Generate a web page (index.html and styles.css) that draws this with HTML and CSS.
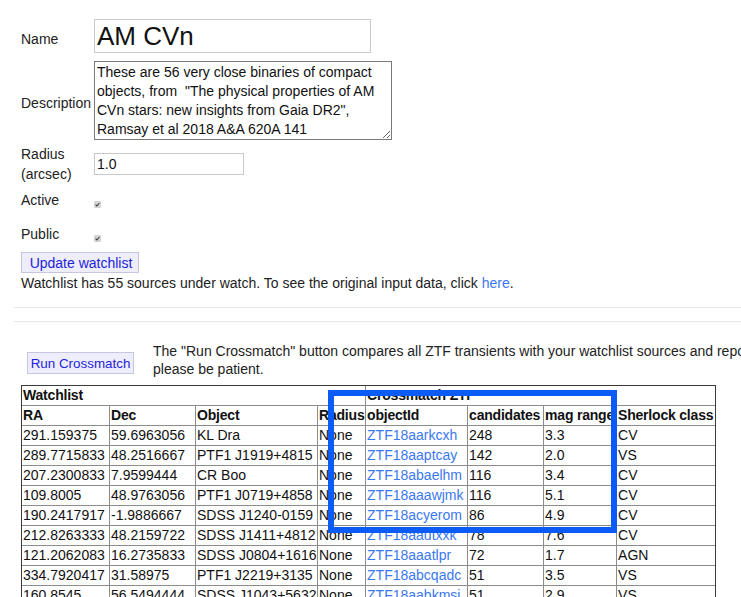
FILE: index.html
```html
<!DOCTYPE html>
<html>
<head>
<meta charset="utf-8">
<title>Watchlist AM CVn</title>
<link rel="stylesheet" href="styles.css">
</head>
<body>
<div class="page">
  <form class="wl-form">
    <div class="row row-name">
      <label class="lbl">Name</label>
      <input class="in-name" type="text" value="AM CVn">
    </div>
    <div class="row row-desc">
      <label class="lbl">Description</label>
      <textarea class="in-desc">These are 56 very close binaries of compact objects, from  "The physical properties of AM CVn stars: new insights from Gaia DR2", Ramsay et al 2018 A&amp;A 620A 141</textarea>
    </div>
    <div class="row row-radius">
      <label class="lbl">Radius<br>(arcsec)</label>
      <input class="in-radius" type="text" value="1.0">
    </div>
    <div class="row row-check row-active">
      <label class="lbl">Active</label>
      <span class="chk"><svg width="7" height="7" viewBox="0 0 7 7"><rect x="0" y="0" width="7" height="7" rx="1" fill="#d4d4d4"/><path d="M1.6 3.7 L2.9 5 L5.4 2" fill="none" stroke="#3a3a3a" stroke-width="1.1"/></svg></span>
    </div>
    <div class="row row-check row-public">
      <label class="lbl">Public</label>
      <span class="chk"><svg width="7" height="7" viewBox="0 0 7 7"><rect x="0" y="0" width="7" height="7" rx="1" fill="#d4d4d4"/><path d="M1.6 3.7 L2.9 5 L5.4 2" fill="none" stroke="#3a3a3a" stroke-width="1.1"/></svg></span>
    </div>
    <button type="button" class="btn btn-update">Update watchlist</button>
    <p class="info">Watchlist has 55 sources under watch. To see the original input data, click <a href="#">here</a>.</p>
  </form>
  <div class="rule rule-1"></div>
  <div class="rule rule-2"></div>
  <div class="xm">
    <button type="button" class="btn btn-run">Run Crossmatch</button>
    <p class="xm-text">The "Run Crossmatch" button compares all ZTF transients with your watchlist sources and reports the matches. This may take a while,<br>please be patient.</p>
  </div>
  <div class="table-wrap">
    <table class="wl-table">
      <colgroup>
        <col class="c-ra"><col class="c-dec"><col class="c-obj"><col class="c-rad">
        <col class="c-oid"><col class="c-cand"><col class="c-mag"><col class="c-sher">
      </colgroup>
      <tr><th colspan="4">Watchlist</th><th colspan="4">Crossmatch ZTF</th></tr>
      <tr><th>RA</th><th>Dec</th><th>Object</th><th>Radius</th><th>objectId</th><th>candidates</th><th>mag range</th><th>Sherlock class</th></tr>
      <tr><td>291.159375</td><td>59.6963056</td><td>KL Dra</td><td>None</td><td><a href="#">ZTF18aarkcxh</a></td><td>248</td><td>3.3</td><td>CV</td></tr>
      <tr><td>289.7715833</td><td>48.2516667</td><td>PTF1 J1919+4815</td><td>None</td><td><a href="#">ZTF18aaptcay</a></td><td>142</td><td>2.0</td><td>VS</td></tr>
      <tr><td>207.2300833</td><td>7.9599444</td><td>CR Boo</td><td>None</td><td><a href="#">ZTF18abaelhm</a></td><td>116</td><td>3.4</td><td>CV</td></tr>
      <tr><td>109.8005</td><td>48.9763056</td><td>PTF1 J0719+4858</td><td>None</td><td><a href="#">ZTF18aaawjmk</a></td><td>116</td><td>5.1</td><td>CV</td></tr>
      <tr><td>190.2417917</td><td>-1.9886667</td><td>SDSS J1240-0159</td><td>None</td><td><a href="#">ZTF18acyerom</a></td><td>86</td><td>4.9</td><td>CV</td></tr>
      <tr><td>212.8263333</td><td>48.2159722</td><td>SDSS J1411+4812</td><td>None</td><td><a href="#">ZTF18aautxxk</a></td><td>78</td><td>7.6</td><td>CV</td></tr>
      <tr><td>121.2062083</td><td>16.2735833</td><td>SDSS J0804+1616</td><td>None</td><td><a href="#">ZTF18aaatlpr</a></td><td>72</td><td>1.7</td><td>AGN</td></tr>
      <tr><td>334.7920417</td><td>31.58975</td><td>PTF1 J2219+3135</td><td>None</td><td><a href="#">ZTF18abcqadc</a></td><td>51</td><td>3.5</td><td>VS</td></tr>
      <tr><td>160.8545</td><td>56.5494444</td><td>SDSS J1043+5632</td><td>None</td><td><a href="#">ZTF18aabkmsi</a></td><td>51</td><td>2.9</td><td>VS</td></tr>
    </table>
    <div class="highlight"></div>
  </div>
</div>
</body>
</html>
```
FILE: styles.css
```css
html, body {
  margin: 0;
  padding: 0;
  background: #fff;
  overflow: hidden;
}
body {
  font-family: "Liberation Sans", Arial, Helvetica, sans-serif;
  font-size: 14px;
  color: #222;
}
.page {
  position: relative;
  width: 1000px;
  padding-bottom: 40px;
}
a {
  color: #3a78ee;
  text-decoration: none;
}

/* form */
.wl-form {
  padding: 19px 0 0 21px;
  margin: 0;
}
.row {
  display: flex;
  align-items: center;
}
.lbl {
  width: 73px;
  flex: none;
  line-height: 20px;
}
.row-name .lbl { padding-top: 5px; }
.row-desc .lbl { padding-top: 5px; }
.in-name {
  box-sizing: border-box;
  width: 277px;
  height: 34px;
  margin: 0;
  padding: 0 2px;
  border: 1px solid #c9c9c9;
  font-family: "Liberation Sans", Arial, sans-serif;
  font-size: 26px;
  color: #111;
}
.row-desc { margin-top: 8px; }
.in-desc {
  box-sizing: border-box;
  width: 298px;
  height: 79px;
  margin: 0;
  padding: 1px 2px;
  border: 1px solid #7a7a7a;
  font-family: "Liberation Sans", Arial, sans-serif;
  font-size: 14px;
  line-height: 19px;
  color: #111;
  overflow: hidden;
}
.row-radius { margin-top: 4px; }
.in-radius {
  box-sizing: border-box;
  width: 150px;
  height: 22px;
  margin: 0;
  padding: 0 2px;
  border: 1px solid #c9c9c9;
  font-family: "Liberation Sans", Arial, sans-serif;
  font-size: 14px;
  color: #111;
}
.row-check { align-items: flex-start; }
.row-active { margin-top: 6px; }
.row-public { margin-top: 14px; }
.chk {
  display: block;
  width: 7px;
  height: 7px;
  margin-top: 11px;
}
.chk svg { display: block; }

.btn {
  display: block;
  box-sizing: border-box;
  margin: 0;
  border: 1px solid #c6c6de;
  background: #ededfb;
  color: #1f1fd8;
  font-family: "Liberation Sans", Arial, sans-serif;
  cursor: pointer;
}
.btn-update {
  margin-top: 8px;
  width: 118px;
  height: 21px;
  padding: 0 0 0 2px;
  font-size: 14px;
}
.info {
  margin: 0;
  line-height: 20px;
}

.rule {
  margin-left: 14px;
  height: 0;
  border-top: 1px solid #e8e8e8;
}
.rule-1 { margin-top: 14px; }
.rule-2 { margin-top: 13px; }

/* crossmatch */
.xm {
  display: flex;
  align-items: flex-start;
  margin-top: 20px;
  padding-left: 27px;
}
.btn-run {
  margin-top: 10px;
  width: 107px;
  height: 22px;
  padding: 0;
  font-size: 13.4px;
  flex: none;
}
.xm-text {
  margin: 0 0 0 19px;
  line-height: 18px;
  white-space: nowrap;
}

/* table */
.table-wrap {
  position: relative;
  margin-top: 7px;
  padding-left: 21px;
}
.wl-table {
  border-collapse: collapse;
  table-layout: fixed;
  width: 695px;
  outline: 1px solid #3a3a3a;
  outline-offset: -1px;
}
.c-ra { width: 88px; }
.c-dec { width: 86px; }
.c-obj { width: 122px; }
.c-rad { width: 48px; }
.c-oid { width: 102px; }
.c-cand { width: 76px; }
.c-mag { width: 73px; }
.c-sher { width: 99px; }
.wl-table th,
.wl-table td {
  border: 1px solid #8c8c8c;
  padding: 1px 1px;
  height: 17px;
  line-height: 17px;
  text-align: left;
  white-space: nowrap;
  overflow: hidden;
  color: #111;
}
.wl-table th {
  font-weight: bold;
  letter-spacing: -0.2px;
}
.wl-table td a { color: #3a78ee; }

.highlight {
  position: absolute;
  left: 328px;
  top: 5px;
  width: 289px;
  height: 143px;
  box-sizing: border-box;
  border: 6px solid #0b5cf6;
  pointer-events: none;
}
```
